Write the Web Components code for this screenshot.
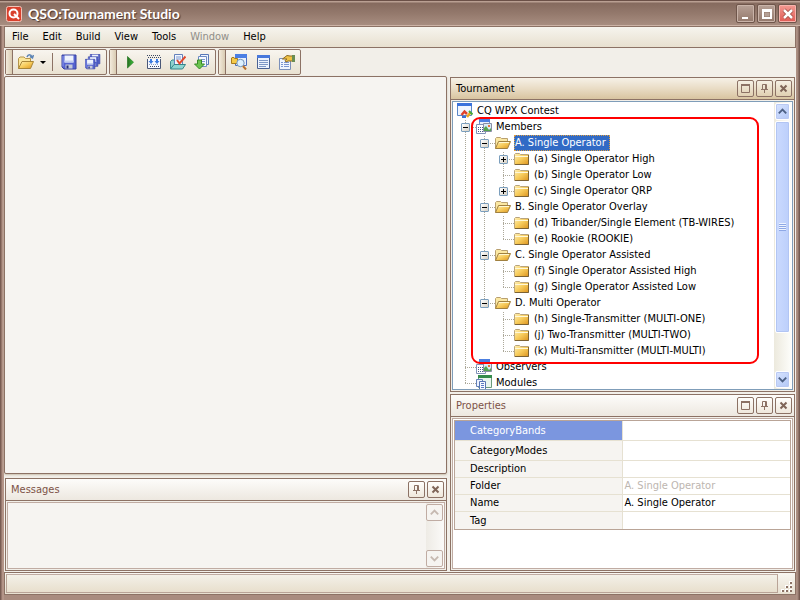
<!DOCTYPE html>
<html lang="en">
<head>
<meta charset="utf-8">
<title>QSO:Tournament Studio</title>
<style>
html, body { margin: 0; height: 100%; }
body {
  --line: #8c7265; --soft: #c0aca3; --paper: #f6f4f1; --face: #f2efe9; --ink: #7d5247;
  font: 11px/16px "DejaVu Sans Condensed", "Noto Sans", sans-serif;
  color: #000; background: #f2efe9; overflow: hidden;
}
</style>
</head>
<body>
<studio-window>
  <title-bar slot="title">QSO:Tournament Studio</title-bar>
  <menu-bar slot="bars">
    <button>File</button><button>Edit</button><button>Build</button><button>View</button><button>Tools</button><button disabled>Window</button><button>Help</button>
  </menu-bar>
  <tool-row slot="bars">
    <tool-group>
      <tool-button icon="open" label="Open"></tool-button><tool-button icon="drop" label="Open options" narrow></tool-button><tool-separator></tool-separator><tool-button icon="save" label="Save"></tool-button><tool-button icon="saveall" label="Save all"></tool-button>
    </tool-group>
    <tool-group>
      <tool-button icon="play" label="Run"></tool-button><tool-button icon="build" label="Build"></tool-button><tool-button icon="check" label="Check"></tool-button><tool-button icon="import" label="Import"></tool-button>
    </tool-group>
    <tool-group>
      <tool-button icon="explore" label="Tournament explorer"></tool-button><tool-button icon="list" label="Messages"></tool-button><tool-button icon="props" label="Properties"></tool-button>
    </tool-group>
  </tool-row>
  <document-area slot="left"></document-area>
  <dock-panel slot="left" class="messages" heading="Messages" buttons="pin close">
    <message-list></message-list>
  </dock-panel>
  <dock-panel slot="right" class="grow" heading="Tournament" buttons="max pin close" active>
    <tree-view>
      <tree-item root icon="contest" label="CQ WPX Contest">
        <tree-item icon="members" label="Members" state="open">
          <tree-item icon="folderopen" label="A. Single Operator" state="open" selected>
            <tree-item icon="folder" label="(a) Single Operator High" state="closed"></tree-item>
            <tree-item icon="folder" label="(b) Single Operator Low"></tree-item>
            <tree-item icon="folder" label="(c) Single Operator QRP" state="closed"></tree-item>
          </tree-item>
          <tree-item icon="folderopen" label="B. Single Operator Overlay" state="open">
            <tree-item icon="folder" label="(d) Tribander/Single Element (TB-WIRES)"></tree-item>
            <tree-item icon="folder" label="(e) Rookie (ROOKIE)"></tree-item>
          </tree-item>
          <tree-item icon="folderopen" label="C. Single Operator Assisted" state="open">
            <tree-item icon="folder" label="(f) Single Operator Assisted High"></tree-item>
            <tree-item icon="folder" label="(g) Single Operator Assisted Low"></tree-item>
          </tree-item>
          <tree-item icon="folderopen" label="D. Multi Operator" state="open">
            <tree-item icon="folder" label="(h) Single-Transmitter (MULTI-ONE)"></tree-item>
            <tree-item icon="folder" label="(j) Two-Transmitter (MULTI-TWO)"></tree-item>
            <tree-item icon="folder" label="(k) Multi-Transmitter (MULTI-MULTI)"></tree-item>
          </tree-item>
        </tree-item>
        <tree-item icon="members" label="Observers"></tree-item>
        <tree-item icon="modules" label="Modules"></tree-item>
      </tree-item>
    </tree-view>
  </dock-panel>
  <dock-panel slot="right" class="props" heading="Properties" buttons="max pin close">
    <property-grid></property-grid>
  </dock-panel>
  <status-bar slot="status"></status-bar>
</studio-window>

<script>
const folderGrad = '<defs><linearGradient id="f" x1="0" y1="0" x2="1" y2="1"><stop offset="0" stop-color="#fff0b4"/><stop offset=".5" stop-color="#f7cc5c"/><stop offset="1" stop-color="#dc9420"/></linearGradient></defs>';
const flop = (x, y, s) => `<g transform="translate(${x} ${y}) scale(${s})"><path d="M.5 .5H14.5V14.5H2.500L.5 12.500Z" fill="#5563d0" stroke="#3a45a0"/><path d="M3 1H12V8H3Z" fill="#eef3fd"/><path d="M3 6H12V8H3Z" fill="#c3cff0"/><path d="M4 10H11V14H4Z" fill="#c4cad8"/><path d="M5 11H7V14H5Z" fill="#28307c"/><path d="M1.500 1.500V12" stroke="#8d9af0"/></g>`;
const card = '<path d="M3.500 .5H13.500V8H3.500Z" fill="#e9effb" stroke="#6f8fcb"/><path d="M3 0H14V3H3Z" fill="#4c7fe0"/>';
const ICONS = {
  logo: '<rect x=".5" y=".5" width="15" height="15" rx="2" fill="#d9402c" stroke="#f3c3b8"/><circle cx="7.500" cy="7.500" r="4" fill="none" stroke="#fff" stroke-width="2"/><path d="M8 8L13 13" stroke="#fff" stroke-width="2"/>',
  open: folderGrad + '<path d="M.5 14.500V4.500L2 3H6L7.500 4.500H12.500V7" fill="#fbe69a" stroke="#b5954a"/><path d="M.5 14.500L4 7.500H15.500L12.500 14.500Z" fill="url(#f)" stroke="#a98638"/><path d="M9 3C10 0 13 0 14 3M12 2.500L14.500 4L15.500 1" fill="none" stroke="#5d84b4" stroke-width="1.500"/>',
  drop: '<path d="M5 7H11L8 10Z" fill="#000"/>',
  save: flop(.5, .5, 1),
  saveall: flop(5, 0, .68) + flop(3, 2.500, .68) + flop(0, 5, .68),
  play: '<defs><linearGradient id="p"><stop offset="0" stop-color="#2a6b22"/><stop offset="1" stop-color="#37c43a"/></linearGradient></defs><path d="M5.500 2.500V14L11.500 8.200Z" fill="url(#p)" stroke="#237a20" stroke-width=".7"/>',
  build: '<path d="M1.500 5V14.500H14.500V5" fill="#f5f8ff" stroke="#4a5878"/><path d="M1 1.500H15M2 3.500H15M4 12.500H13" stroke="#3c4864" stroke-dasharray="1 1"/><path d="M3 10.500H13" stroke="#8aa0c8" stroke-dasharray="1 1"/><path d="M5 5V8M11 5V8" stroke="#3c7be0" stroke-width="2"/><path d="M2.500 7H7.500L5 10ZM8.500 7H13.500L11 10Z" fill="#3c7be0"/>',
  check: '<path d="M.5 14.500V7.500L2 6H5V14Z" fill="#8fd0cc" stroke="#3d8d90"/><path d="M4.500 .5H12.500V12H4.500Z" fill="#f2f7ff" stroke="#6581bb"/><path d="M6 3H11M6 5H11" stroke="#7d98d0"/><path d="M.5 15L4 10.500H15.500L12.500 15Z" fill="#8ed6d2" stroke="#358488"/><path d="M7 6L9.500 9.500L15.500 2.500" fill="none" stroke="#e04a2e" stroke-width="2"/>',
  import: '<path d="M6.500 .5H14.500V10.500H6.500Z" fill="#eef4ff" stroke="#5878b8"/><path d="M4.500 2.500H12.500V12.500H4.500Z" fill="#f6f9ff" stroke="#6c8ac4"/><path d="M7 5.500H11M7 7.500H11" stroke="#7d98d0"/><path d="M3.500 6H7.500V10H10.500L5.500 15L.5 10H3.500Z" fill="#6cc450" stroke="#378a28"/>',
  explore: '<path d="M4.500 .5H15.500V11.500H4.500Z" fill="#e8f0fd" stroke="#4c6fbd"/><path d="M4 0H16V4H4Z" fill="#4b7fe4"/><path d="M.5 4V9.500H6.500V4.500H3.500L3 3.500H1Z" fill="#f6ca48" stroke="#a87c1c"/><circle cx="9.500" cy="9" r="3.700" fill="#ddf1ff" stroke="#7393b8"/><path d="M12 12L15 15.500" stroke="#b8702c" stroke-width="2"/>',
  list: '<path d="M2.500 1.500H14.500V14.500H2.500Z" fill="#edf3fd" stroke="#4a6294"/><path d="M2 1H15V4H2Z" fill="#4979dc"/><path d="M4 6.500H13M4 8.500H13M4 10.500H13M4 12.500H11" stroke="#7f98c6"/>',
  props: '<path d="M.5 4.500H11.500V15.500H.5Z" fill="#f2f6fd" stroke="#7b90ba"/><path d="M2 8.500H4M5 8.500H10M2 10.500H4M5 10.500H10M2 12.500H4M5 12.500H10" stroke="#7d97d0"/><path d="M3.500 5L8 1.500L11 2H14V7H9L7 8L6 6.500L8 5Z" fill="#f1c244" stroke="#8b6a24"/><path d="M13 1H16V8H13Z" fill="#6a8d53"/>',
  contest: '<path d="M.5 .5H14.500V12.500H.5Z" fill="#eff5ff" stroke="#5a86c8"/><path d="M0 0H15V3H0Z" fill="#3a72dc"/><path d="M4.500 12L7.500 8.500L10 11" fill="none" stroke="#e0442c" stroke-width="2.500"/><path d="M10 14L13.500 9.500" stroke="#f0a81c" stroke-width="2.500"/><path d="M5 14H9" stroke="#3c72d8" stroke-width="2"/><path d="M12 8L15.500 11.500" stroke="#46a83a" stroke-width="2"/>',
  members: card + '<path d="M.5 5.500H9.500V14.500H.5Z" fill="#fff" stroke="#8093b8"/><path d="M2 8.500H9M2 10.500H9M2 12.500H9" stroke="#455b8c" stroke-dasharray="1 1"/><path d="M7.500 4.500H15.500V12.500H7.500Z" fill="#d7eaf8" stroke="#888fa4"/><path d="M8 12V9L10 7L13 11L15 9V12Z" fill="#55a650"/><path d="M12 6H14V8H12Z" fill="#e8763c"/>',
  modules: '<path d="M2.500 .5H15.500V12.500H2.500Z" fill="#e9f6ee" stroke="#6b9a7b"/><path d="M2 0H16V3H2Z" fill="#348b4c"/><path d="M.5 4.500H6.500V11.500H.5Z" fill="#eef3ff" stroke="#6581b8"/><path d="M3.500 6.500H9.500V14.500H3.500Z" fill="#f7faff" stroke="#5876b4"/><path d="M5 8.500H8M5 10.500H8M5 12.500H8" stroke="#5c7cc4"/>',
  folder: folderGrad + '<path d="M.5 13.500V3.500L1.500 2.500H5.500L6.500 3.500H14.500V13.500Z" fill="url(#f)" stroke="#b9a47c"/><path d="M1 5.500H14" stroke="#fff8d8"/><path d="M1 13.500H14.500V4" fill="none" stroke="#7b6234"/>',
  folderopen: folderGrad + '<path d="M.5 13.500V3.500L1.500 2.500H5.500L6.500 3.500H12.500V6" fill="#fbe8a2" stroke="#b9a070"/><path d="M.5 13.500L3.500 6.500H15.500L12.500 13.500Z" fill="url(#f)" stroke="#a08040"/><path d="M4 7.500H14" stroke="#fff8d0"/>',
  min: '<path d="M4 11H10V13H4Z" fill="#fff"/>',
  winmax: '<path d="M3 3H13V13H3Z" fill="#fff"/><path d="M5 6H11V11H5Z" fill="#93786b"/><path d="M5.500 6.500H10.500V10.500H5.500Z" fill="#b5a196"/>',
  winclose: '<path d="M4 4L12 12M12 4L4 12" stroke="#9c4a40" stroke-width="4"/><path d="M4 4L12 12M12 4L4 12" stroke="#fff" stroke-width="2.500"/>',
  max: '<path d="M4.500 4.500H12.500V12.500H4.500Z" fill="none" stroke="#8c7265"/><path d="M4 4H13V6H4Z" fill="#8c7265"/>',
  pin: '<path d="M6.500 9V4.500H10.500V9M9.500 4V9M5 9.500H12M8.500 10V13" fill="none" stroke="#8c7265"/>',
  close: '<path d="M5.500 5.500L11.500 11.500M11.500 5.500L5.500 11.500" stroke="#7f6558" stroke-width="2"/>',
  up: '<path d="M4 10L8 6L12 10" fill="none" stroke="currentColor" stroke-width="2"/>',
  down: '<path d="M4 6L8 10L12 6" fill="none" stroke="currentColor" stroke-width="2"/>'
};
const svg = (n, size = 16, box = '0 0 16 16') => `<svg width="${size}" height="${size}" viewBox="${box}" aria-hidden="true">${ICONS[n]}</svg>`;
const BASE = `*{box-sizing:border-box} svg{display:block;flex:none} button{font:inherit;color:inherit;margin:0;padding:0;border:0;background:none}`;

function define(name, css, html) {
  customElements.define(name, class extends HTMLElement {
    constructor() { super(); this.attachShadow({ mode: 'open' }); }
    connectedCallback() {
      this.shadowRoot.innerHTML = `<style>${BASE}${css}</style>` + (typeof html === 'function' ? html(this) : html);
    }
  });
}

define('studio-window', `
:host{display:flex;flex-direction:column;height:100vh;box-sizing:border-box;border:solid #94786b;border-width:0 4px 5px;border-image:linear-gradient(90deg,#6b5047,#c0a093 3px,#a98c7f 4px,#a98c7f calc(100% - 4px),#b19588 calc(100% - 3px),#6b5047) 1 4 5;background:var(--face)}
.title{margin:0 -4px}
main{flex:1;min-height:0;display:grid;grid-template-columns:minmax(0,1fr) 345px;column-gap:3px;padding-right:1px}
section{min-height:0;min-width:0;display:flex;flex-direction:column}
.left{gap:4px;}.right{gap:2px;padding:1px 0 0}
::slotted(.grow),::slotted(document-area){flex:1;min-height:0}
::slotted(.messages){height:93px;margin-left:1px}
::slotted(.props){height:177px}
`, `<div class="title"><slot name="title"></slot></div><slot name="bars"></slot>
<main><section class="left"><slot name="left"></slot></section><section class="right"><slot name="right"></slot></section></main><slot name="status"></slot>`);

define('title-bar', `
:host{display:flex;align-items:center;box-sizing:border-box;height:26px;padding:1px 3px 0 6px;gap:6px;background:linear-gradient(#6b5047 1px,#b99f92 1px,#b99f92 2px,#856a5e 3px,#957a6d 14px,#a78d80 25px,#ccb3a6 25px)}
h1{flex:1;margin:0;font:bold 14px/20px Lato,"Noto Sans",sans-serif;color:#fff;text-shadow:1px 1px 1px #4b342c;white-space:nowrap}
div{display:flex;gap:2px}
button{width:19px;height:19px;display:grid;place-items:center;border:1px solid #6f564b;border-radius:2px;box-shadow:inset 0 0 0 1px #c9b3a8;background:linear-gradient(#b7a196,#93786b)}
.x{background:linear-gradient(#f39a92,#e05a54);box-shadow:inset 0 0 0 1px #f7b3ac}
`, `${svg('logo')}<h1><slot></slot></h1><div><button aria-label="Minimize">${svg('min')}</button><button aria-label="Maximize">${svg('winmax')}</button><button class="x" aria-label="Close">${svg('winclose')}</button></div>`);

define('menu-bar', `
:host{display:flex;align-items:center;box-sizing:border-box;height:22px;border:1px solid var(--line);background:linear-gradient(#f6f4ee,#e8e0d0)}
::slotted(button){font:inherit;color:#000;margin:0;border:0;background:none;padding:0 7px;line-height:18px}
::slotted(button[disabled]){color:#8f8d88}
`, `<slot></slot>`);

define('tool-row', `:host{display:flex;box-sizing:border-box;height:28px;gap:2px;padding:1px}`, `<slot></slot>`);
define('tool-group', `
:host{display:flex;align-items:center;box-sizing:border-box;height:26px;padding-right:1px;border:1px solid var(--line);border-radius:2px;background:linear-gradient(#f8f5ef,#e9e1d1)}
i{width:7px;align-self:stretch;border-right:1px solid var(--line);background:linear-gradient(90deg,#f3ebdc,#d9cbb2);margin-right:1px}
`, `<i></i><slot></slot>`);
define('tool-separator', `:host{width:1px;height:18px;background:var(--line);margin:0 4px}`, '');
define('tool-button', `:host{display:block}button{width:24px;height:24px;display:grid;place-items:center}:host([narrow]) button{width:10px}`,
  e => `<button aria-label="${e.getAttribute('label')}">${e.hasAttribute('narrow') ? svg(e.getAttribute('icon'), 10, '3 3 10 10') : svg(e.getAttribute('icon'))}</button>`);

define('document-area', `:host{display:block;box-sizing:border-box;border:1px solid var(--line);border-radius:2px;background:var(--paper);box-shadow:0 1px 2px #c9bfae}`, '');

define('dock-panel', `
:host{display:flex;flex-direction:column;box-sizing:border-box;border:1px solid var(--line);background:var(--face)}
header{height:22px;flex:none;display:flex;align-items:center;gap:2px;padding:0 2px 0 5px;border-bottom:1px solid var(--line);background:linear-gradient(#fdfcfa,#ede8e0)}
h2{flex:1;margin:0;font:inherit;color:var(--ink)}
:host([active]) header{background:linear-gradient(#f6f1e7,#e9dcc5 50%,#d8c4a0)}
:host([active]) h2{color:#000}
button{width:17px;height:17px;display:grid;place-items:center;border:1px solid var(--line);border-radius:2px;background:linear-gradient(#fffefc,#efe8dc)}
:host([active]) button{background:linear-gradient(#f6f0e4,#e0d0b2)}
.body{flex:1;min-height:0;margin:1px;border:1px solid var(--soft);display:flex}
:host([active]) .body{border-color:#7f9db9}
::slotted(*){flex:1;min-width:0}
`, e => `<header><h2>${e.getAttribute('heading')}</h2>${e.getAttribute('buttons').split(' ').map(b => `<button aria-label="${b}">${svg(b, 15, '1 1 15 15')}</button>`).join('')}</header><div class="body"><slot></slot></div>`);

define('scroll-bar', `
:host{display:flex;flex-direction:column;width:17px;box-sizing:border-box;padding:1px;gap:1px;color:#4d6185;background:linear-gradient(90deg,#ece9dd,#fdfdfa)}
button{width:15px;height:17px;display:grid;place-items:center;border:1px solid #fff;border-radius:2px;background:linear-gradient(135deg,#d8e4ff,#b2c7f6);box-shadow:inset 0 0 0 1px #b9c9f3}
.track{flex:1;display:flex;flex-direction:column}
.thumb{flex:0 0 85%;display:grid;place-items:center;border:1px solid #fff;border-radius:2px;background:linear-gradient(90deg,#cbdafe,#bccffb);box-shadow:inset 0 0 0 1px #b2c5f3}
.thumb i{width:7px;height:8px;background:repeating-linear-gradient(#eef4ff 0 1px,#8ea8e6 1px 2px)}
:host([off]){color:#c6b9b1;background:linear-gradient(90deg,#eeebe5,#fbfaf8)}
:host([off]) button{width:17px;background:#f6f4f1;border-color:var(--soft);box-shadow:none}
:host([off]){width:18px;padding:1px 1px 1px 0}
`, e => `<button aria-label="Scroll up">${svg('up', 13, '1 1 14 14')}</button><div class="track">${e.hasAttribute('off') ? '' : '<div class="thumb"><i></i></div>'}</div><button aria-label="Scroll down">${svg('down', 13, '1 1 14 14')}</button>`);

define('message-list', `:host{display:flex;justify-content:flex-end;background:var(--paper)}scroll-bar{flex:none}`, `<scroll-bar off></scroll-bar>`);

define('tree-view', `
:host{display:flex;position:relative;background:#fff;overflow:hidden}
.items{flex:1;min-width:0;padding:1px 0 0 4px;height:0}
scroll-bar{flex:none;margin-right:1px}
.mark{position:absolute;left:18px;top:15px;width:288px;height:247px;border:2px solid #f00;border-radius:9px;pointer-events:none}
`, `<div class="items" role="tree"><slot></slot></div><scroll-bar></scroll-bar><div class="mark"></div>`);

define('tree-item', `
:host{display:block;position:relative;white-space:nowrap}
.v{position:absolute;left:8px;top:0;bottom:0;width:1px;background:repeating-linear-gradient(#fff 0 1px,#aca899 1px 2px)}
:host(:last-of-type) .v{bottom:auto;height:9px}
:host([root]) .v,:host([root]) .cell{display:none}
.row{display:flex;height:16px;align-items:center}
.cell{width:19px;height:16px;flex:none;display:flex;align-items:center;padding-left:4px;background:repeating-linear-gradient(90deg,#aca899 0 1px,transparent 1px 2px) 8px 8px/11px 1px no-repeat;position:relative}
.cell button{width:9px;height:9px;border:1px solid #7b9ebd;border-radius:1px;background:linear-gradient(90deg,#000,#000) 1px 3px/5px 1px no-repeat,linear-gradient(135deg,#fff,#d6d0c4)}
:host([state=closed]) .cell button{background:linear-gradient(90deg,#000,#000) 1px 3px/5px 1px no-repeat,linear-gradient(#000,#000) 3px 1px/1px 5px no-repeat,linear-gradient(135deg,#fff,#d6d0c4)}
.label{margin-left:3px;padding:0 4px 0 1px;line-height:16px}
:host([selected]) .label{background:#316ac5;color:#fff;outline:1px dotted #e0a040;outline-offset:-1px}
.kids{margin-left:19px}
:host([root]) .kids{margin-left:0}
`, e => `<div class="v"></div><div class="row" role="treeitem"><span class="cell">${e.hasAttribute('state') ? `<button aria-label="Toggle ${e.getAttribute('label')}"></button>` : ''}</span>${svg(e.getAttribute('icon'))}<span class="label">${e.getAttribute('label')}</span></div><div class="kids" role="group"><slot></slot></div>`);

define('property-grid', `
:host{display:block;background:#fff;padding:1px 1px 0}
table{width:100%;border-collapse:separate;border-spacing:0;border:1px solid #b9a497;table-layout:fixed}
th,td{font-weight:normal;text-align:left;padding:0;height:17px;line-height:16px;border:solid #e6e1d2;border-width:0 0 1px}
th{width:50%;padding-left:15px;background:var(--paper);border-right-width:1px}
td{padding-left:2px}
.tall th,.tall td{height:20px}
.last th,.last td{border-bottom-width:0}
.sel th{background:#7b96df;color:#fff}
.ro td{color:#bdb6b0}
`, `<table><tbody>
<tr class="tall sel"><th scope="row">CategoryBands</th><td></td></tr>
<tr class="tall"><th scope="row">CategoryModes</th><td></td></tr>
<tr><th scope="row">Description</th><td></td></tr>
<tr class="ro"><th scope="row">Folder</th><td>A. Single Operator</td></tr>
<tr><th scope="row">Name</th><td>A. Single Operator</td></tr>
<tr class="last"><th scope="row">Tag</th><td></td></tr>
</tbody></table>`);

define('status-bar', `
:host{display:flex;box-sizing:border-box;height:23px;margin-top:1px;padding:1px;border:1px solid var(--line);background:linear-gradient(#f8f6f1,#e8e0d0)}
div{flex:1;border:1px solid #b9a497;border-top-color:var(--soft);background:linear-gradient(#f3f0e8,#e8dfcd)}
svg{align-self:flex-end}
`, `<div role="status"></div><svg width="16" height="13" viewBox="0 0 16 13" aria-hidden="true"><path d="M11 1h3v3h-3zM7 5h3v3h-3zM11 5h3v3h-3zM3 9h3v3h-3zM7 9h3v3h-3zM11 9h3v3h-3z" fill="#fff"/><path d="M12 2h2v2h-2zM8 6h2v2h-2zM12 6h2v2h-2zM4 10h2v2h-2zM8 10h2v2h-2zM12 10h2v2h-2z" fill="#8c7265"/></svg>`);
</script>
</body>
</html>
